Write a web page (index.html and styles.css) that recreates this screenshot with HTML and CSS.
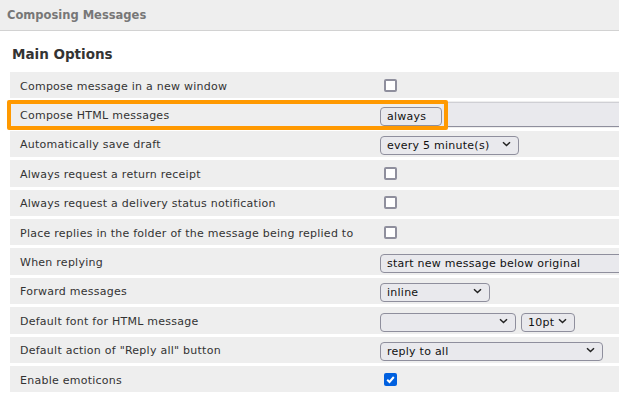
FILE: index.html
```html
<!DOCTYPE html>
<html>
<head>
<meta charset="utf-8">
<link rel="stylesheet" href="styles.css">
</head>
<body>
<div class="header">Composing Messages</div>
<div class="section">
  <h2 class="section-title">Main Options</h2>
  <div class="options">
    <div class="row">
      <div class="label">Compose message in a new window</div>
      <div class="control"><input type="checkbox" class="cb"></div>
    </div>
    <div class="row">
      <div class="label">Compose HTML messages</div>
      <div class="control"><span class="sel"><select class="select w-always"><option>always</option></select></span><span class="band"></span></div>
    </div>
    <div class="row">
      <div class="label">Automatically save draft</div>
      <div class="control"><span class="sel"><select class="select w-draft"><option>every 5 minute(s)</option></select><svg class="chev" width="9" height="6" viewBox="0 0 9 6"><path d="M1 1.2 L4.5 4.5 L8 1.2" fill="none" stroke="#222" stroke-width="1.5"/></svg></span></div>
    </div>
    <div class="row">
      <div class="label">Always request a return receipt</div>
      <div class="control"><input type="checkbox" class="cb"></div>
    </div>
    <div class="row">
      <div class="label">Always request a delivery status notification</div>
      <div class="control"><input type="checkbox" class="cb"></div>
    </div>
    <div class="row">
      <div class="label">Place replies in the folder of the message being replied to</div>
      <div class="control"><input type="checkbox" class="cb"></div>
    </div>
    <div class="row">
      <div class="label">When replying</div>
      <div class="control"><span class="sel"><select class="select w-reply"><option>start new message below original</option></select></span></div>
    </div>
    <div class="row">
      <div class="label">Forward messages</div>
      <div class="control"><span class="sel"><select class="select w-inline"><option>inline</option></select><svg class="chev" width="9" height="6" viewBox="0 0 9 6"><path d="M1 1.2 L4.5 4.5 L8 1.2" fill="none" stroke="#222" stroke-width="1.5"/></svg></span></div>
    </div>
    <div class="row">
      <div class="label">Default font for HTML message</div>
      <div class="control"><span class="sel"><select class="select w-font"><option></option></select><svg class="chev" width="9" height="6" viewBox="0 0 9 6"><path d="M1 1.2 L4.5 4.5 L8 1.2" fill="none" stroke="#222" stroke-width="1.5"/></svg></span><span class="sel sel-gap"><select class="select w-size"><option>10pt</option></select><svg class="chev" width="9" height="6" viewBox="0 0 9 6"><path d="M1 1.2 L4.5 4.5 L8 1.2" fill="none" stroke="#222" stroke-width="1.5"/></svg></span></div>
    </div>
    <div class="row">
      <div class="label">Default action of "Reply all" button</div>
      <div class="control"><span class="sel"><select class="select w-all"><option>reply to all</option></select><svg class="chev" width="9" height="6" viewBox="0 0 9 6"><path d="M1 1.2 L4.5 4.5 L8 1.2" fill="none" stroke="#222" stroke-width="1.5"/></svg></span></div>
    </div>
    <div class="row">
      <div class="label">Enable emoticons</div>
      <div class="control"><span class="cb-checked"><svg width="13" height="13" viewBox="0 0 13 13"><path d="M3.2 6.8 L5.5 9 L9.8 4" fill="none" stroke="#fff" stroke-width="2"/></svg></span></div>
    </div>
  </div>
  <div class="highlight"></div>
</div>
</body>
</html>
```
FILE: styles.css
```css
html, body {
  margin: 0;
  padding: 0;
  background: #fff;
  overflow: hidden;
}
body {
  font-family: "DejaVu Sans", Verdana, sans-serif;
  width: 619px;
  height: 402px;
}
.header {
  height: 30px;
  line-height: 30px;
  padding-left: 7px;
  background: #eeeeee;
  border-bottom: 1px solid #d2d2d2;
  color: #777;
  font-size: 11.5px;
  font-weight: bold;
}
.section {
  position: relative;
}
.section-title {
  margin: 0;
  padding: 14px 0 0 12px;
  height: 27px;
  line-height: 18px;
  font-size: 13.5px;
  font-weight: bold;
  color: #333;
}
.options {
  display: flex;
  flex-direction: column;
  gap: 3px;
  margin-left: 10px;
  width: 720px;
}
.row {
  display: grid;
  grid-template-columns: 370px 1fr;
  align-items: center;
  height: 26.4px;
  background: #eeeeee;
}
.label {
  padding: 2px 0 0 10px;
  font-size: 11px;
  letter-spacing: 0.25px;
  color: #333;
  white-space: nowrap;
}
.control {
  display: flex;
  align-items: center;
}
.cb {
  appearance: none;
  -webkit-appearance: none;
  margin: 0 0 0 4px;
  width: 13px;
  height: 13px;
  box-sizing: border-box;
  border: 2px solid #8f8f9d;
  border-radius: 2px;
  background: #fff;
}
.cb-checked {
  display: block;
  margin-left: 4px;
  width: 13px;
  height: 13px;
  border-radius: 2px;
  background: #0060df;
}
.cb-checked svg {
  display: block;
}
.sel {
  position: relative;
  display: inline-block;
  height: 19px;
}
.sel-gap {
  margin-left: 5px;
}
.select {
  appearance: none;
  -webkit-appearance: none;
  box-sizing: border-box;
  height: 19px;
  margin: 0;
  padding: 0 0 0 6px;
  border: 1px solid #8f8f9d;
  border-radius: 4px;
  background: #e9e9ed;
  color: #111;
  font-family: "DejaVu Sans", Verdana, sans-serif;
  font-size: 11px;
  letter-spacing: 0.25px;
  line-height: 17px;
}
.chev {
  position: absolute;
  right: 8px;
  top: 7px;
}
.w-always { width: 62px; }
.w-draft { width: 139px; }
.w-reply { width: 300px; }
.w-inline { width: 110px; }
.w-font { width: 136px; }
.w-size { width: 54px; }
.w-all { width: 223px; }
.band {
  display: block;
  flex: 1;
  height: 25px;
  box-sizing: border-box;
  background: #e9e9ed;
  border-top: 1px solid #cfcfd4;
  border-bottom: 1px solid #8f8f9d;
}
.highlight {
  position: absolute;
  left: 7px;
  top: 69px;
  width: 441px;
  height: 30px;
  box-sizing: border-box;
  border: 4px solid #ff9900;
  border-radius: 2px;
}
```
